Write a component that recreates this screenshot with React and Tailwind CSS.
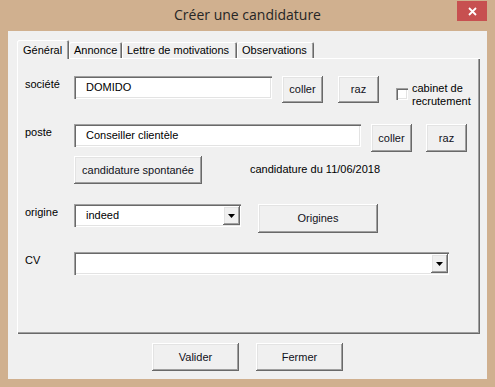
import React from 'react';

const raised =
  'shadow-[inset_-1px_-1px_0_#696969,inset_1px_1px_0_#ffffff,inset_-2px_-2px_0_#a0a0a0,inset_2px_2px_0_#e3e3e3]';
const sunken =
  'shadow-[inset_1px_1px_0_#a0a0a0,inset_2px_2px_0_#696969,inset_-1px_-1px_0_#ffffff,inset_-2px_-2px_0_#e3e3e3]';
const tabEdge =
  'shadow-[inset_1px_1px_0_#ffffff,inset_-1px_0_0_#696969,inset_-2px_0_0_#a0a0a0]';

const Btn = ({ className, children }) => (
  <div className={`flex items-center justify-center bg-[#f0f0f0] text-[#101020] ${raised} ${className}`}>
    {children}
  </div>
);

const TextBox = ({ className, value }) => (
  <div className={`flex items-center bg-white pl-[12px] ${sunken} ${className}`}>{value}</div>
);

const Combo = ({ className, value }) => (
  <div className={`flex items-stretch bg-white pt-[2px] pr-[1px] pb-[2px] ${sunken} ${className}`}>
    <div className="flex-1 flex items-center pl-[12px]">{value}</div>
    <div className={`w-[17px] flex items-center justify-center bg-[#f0f0f0] ${raised}`}>
      <svg width="7" height="4" viewBox="0 0 7 4">
        <polygon points="0,0 7,0 3.5,4" fill="#000" />
      </svg>
    </div>
  </div>
);

const Label = ({ children }) => (
  <div className="w-[49px] shrink-0 pt-[2px] leading-[13px]">{children}</div>
);

export default function App() {
  return (
    <div className="w-[495px] h-[387px] bg-[#d0b08f] flex flex-col font-['Liberation_Sans',Arial,sans-serif] text-[11px] text-black">
      {/* barre de titre */}
      <div className="relative h-[31px] shrink-0 flex items-center justify-center">
        <span className="font-['Open_Sans',sans-serif] text-[14px] text-[#262626] pb-[2px]">
          Créer une candidature
        </span>
        <div className="absolute right-[8px] top-[1px] w-[30px] h-[20px] bg-[#c75050] flex items-center justify-center">
          <svg width="9" height="9" viewBox="0 0 9 9">
            <path d="M1 1 L8 8 M8 1 L1 8" stroke="#fff" strokeWidth="1.8" />
          </svg>
        </div>
      </div>

      {/* zone client */}
      <div className="mx-[8px] mb-[8px] flex-1 bg-[#f0f0f0] flex flex-col pt-[9px]">
        <div className="ml-[9px] h-[18px] flex items-end">
          <div className={`relative z-10 w-[52px] h-[19px] -mb-[1px] pl-[6px] pt-[2px] bg-[#f0f0f0] rounded-t-[2px] ${tabEdge}`}>
            Général
          </div>
          <div className={`w-[53px] h-[16px] pl-[5px] pt-[2px] leading-[13px] bg-[#f0f0f0] rounded-t-[2px] ${tabEdge}`}>
            Annonce
          </div>
          <div className={`w-[115px] h-[16px] pl-[5px] pt-[2px] leading-[13px] bg-[#f0f0f0] rounded-t-[2px] ${tabEdge}`}>
            Lettre de motivations
          </div>
          <div className={`w-[77px] h-[16px] pl-[5px] pt-[2px] leading-[13px] bg-[#f0f0f0] rounded-t-[2px] ${tabEdge}`}>
            Observations
          </div>
        </div>

        {/* panneau Général */}
        <div className="ml-[9px] w-[463px] h-[276px] flex flex-col pl-[8px] pt-[18px] shadow-[inset_1px_1px_0_#ffffff,inset_-1px_-1px_0_#696969,inset_-2px_-2px_0_#a0a0a0]">
          <div className="flex items-start h-[27px]">
            <Label>société</Label>
            <TextBox className="w-[198px] h-[23px]" value="DOMIDO" />
            <Btn className="ml-[10px] w-[41px] h-[27px]">coller</Btn>
            <Btn className="ml-[15px] w-[41px] h-[27px]">raz</Btn>
            <div className={`ml-[17px] mt-[12px] w-[12px] h-[12px] bg-white ${sunken}`} />
            <div className="ml-[4px] mt-[6px] leading-[13px]">
              cabinet de
              <br />
              recrutement
            </div>
          </div>

          <div className="flex items-start h-[28px] mt-[21px]">
            <Label>poste</Label>
            <TextBox className="w-[287px] h-[23px]" value="Conseiller clientèle" />
            <Btn className="ml-[10px] w-[41px] h-[28px]">coller</Btn>
            <Btn className="ml-[14px] w-[41px] h-[28px]">raz</Btn>
          </div>

          <div className="flex items-center h-[28px] mt-[4px] pl-[49px]">
            <Btn className="w-[128px] h-[28px]">candidature spontanée</Btn>
            <span className="ml-[48px] pb-[2px]">candidature du 11/06/2018</span>
          </div>

          <div className="flex items-start h-[29px] mt-[20px]">
            <Label>origine</Label>
            <Combo className="w-[167px] h-[23px]" value="indeed" />
            <Btn className="ml-[17px] w-[120px] h-[29px]">Origines</Btn>
          </div>

          <div className="flex items-start h-[23px] mt-[19px]">
            <Label>CV</Label>
            <Combo className="w-[375px] h-[23px]" value="" />
          </div>
        </div>

        <div className="mt-[9px] flex justify-center gap-[17px]">
          <Btn className="w-[87px] h-[28px]">Valider</Btn>
          <Btn className="w-[87px] h-[28px]">Fermer</Btn>
        </div>
      </div>
    </div>
  );
}
